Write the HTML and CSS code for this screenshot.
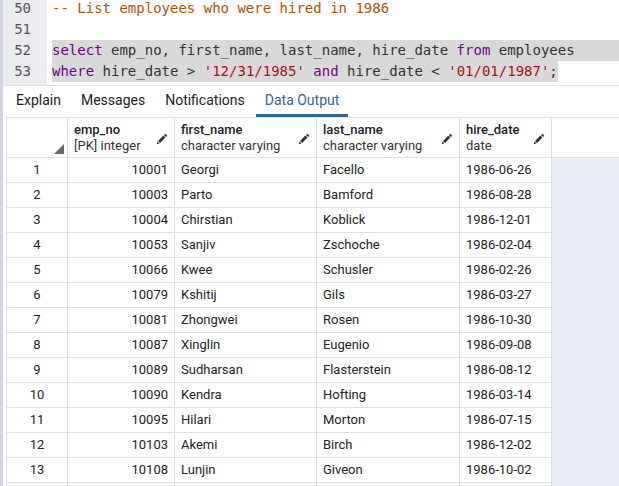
FILE: index.html
```html
<!DOCTYPE html>
<html>
<head>
<meta charset="utf-8">
<link rel="stylesheet" href="styles.css">
</head>
<body>
<div class="app">
  <div class="editor">
    <div class="gutter">
      <div class="ln">50</div>
      <div class="ln">51</div>
      <div class="ln">52</div>
      <div class="ln">53</div>
    </div>
    <div class="code">
      <div class="line"><span class="cm-comment">-- List employees who were hired in 1986</span></div>
      <div class="line">&nbsp;</div>
      <div class="line"><span class="sel sel-full"><span class="cm-kw">select</span> emp_no, first_name, last_name, hire_date <span class="cm-kw">from</span> employees</span></div>
      <div class="line"><span class="sel"><span class="cm-kw">where</span> hire_date &gt; <span class="cm-str">'12/31/1985'</span> <span class="cm-kw">and</span> hire_date &lt; <span class="cm-str">'01/01/1987'</span>;</span></div>
    </div>
  </div>

  <div class="tabs">
    <div class="tab">Explain</div>
    <div class="tab">Messages</div>
    <div class="tab">Notifications</div>
    <div class="tab active">Data Output</div>
  </div>

  <div class="grid">
    <div class="hc hc-corner"><svg class="corner" width="10" height="10" viewBox="0 0 10 10"><polygon points="10,0 10,10 0,10" fill="#666"/></svg></div>
    <div class="hc"><div class="hlabel"><div class="hname">emp_no</div><div class="htype">[PK] integer</div></div><svg class="pencil" width="12" height="12" viewBox="0 0 16 16"><path d="M12.4 0.9l2.7 2.7-1.7 1.7-2.7-2.7z M9.9 3.4l2.7 2.7-7.2 7.2-2.7-2.7z M2 11.4l2.6 2.6-3.6 1z" fill="#333"/></svg></div>
    <div class="hc"><div class="hlabel"><div class="hname">first_name</div><div class="htype">character varying</div></div><svg class="pencil" width="12" height="12" viewBox="0 0 16 16"><path d="M12.4 0.9l2.7 2.7-1.7 1.7-2.7-2.7z M9.9 3.4l2.7 2.7-7.2 7.2-2.7-2.7z M2 11.4l2.6 2.6-3.6 1z" fill="#333"/></svg></div>
    <div class="hc"><div class="hlabel"><div class="hname">last_name</div><div class="htype">character varying</div></div><svg class="pencil" width="12" height="12" viewBox="0 0 16 16"><path d="M12.4 0.9l2.7 2.7-1.7 1.7-2.7-2.7z M9.9 3.4l2.7 2.7-7.2 7.2-2.7-2.7z M2 11.4l2.6 2.6-3.6 1z" fill="#333"/></svg></div>
    <div class="hc"><div class="hlabel"><div class="hname">hire_date</div><div class="htype">date</div></div><svg class="pencil" width="12" height="12" viewBox="0 0 16 16"><path d="M12.4 0.9l2.7 2.7-1.7 1.7-2.7-2.7z M9.9 3.4l2.7 2.7-7.2 7.2-2.7-2.7z M2 11.4l2.6 2.6-3.6 1z" fill="#333"/></svg></div>
    <div class="hc hc-fill"></div>

    <div class="c num">1</div><div class="c r">10001</div><div class="c">Georgi</div><div class="c">Facello</div><div class="c">1986-06-26</div><div class="fill"></div>
    <div class="c num">2</div><div class="c r">10003</div><div class="c">Parto</div><div class="c">Bamford</div><div class="c">1986-08-28</div><div class="fill"></div>
    <div class="c num">3</div><div class="c r">10004</div><div class="c">Chirstian</div><div class="c">Koblick</div><div class="c">1986-12-01</div><div class="fill"></div>
    <div class="c num">4</div><div class="c r">10053</div><div class="c">Sanjiv</div><div class="c">Zschoche</div><div class="c">1986-02-04</div><div class="fill"></div>
    <div class="c num">5</div><div class="c r">10066</div><div class="c">Kwee</div><div class="c">Schusler</div><div class="c">1986-02-26</div><div class="fill"></div>
    <div class="c num">6</div><div class="c r">10079</div><div class="c">Kshitij</div><div class="c">Gils</div><div class="c">1986-03-27</div><div class="fill"></div>
    <div class="c num">7</div><div class="c r">10081</div><div class="c">Zhongwei</div><div class="c">Rosen</div><div class="c">1986-10-30</div><div class="fill"></div>
    <div class="c num">8</div><div class="c r">10087</div><div class="c">Xinglin</div><div class="c">Eugenio</div><div class="c">1986-09-08</div><div class="fill"></div>
    <div class="c num">9</div><div class="c r">10089</div><div class="c">Sudharsan</div><div class="c">Flasterstein</div><div class="c">1986-08-12</div><div class="fill"></div>
    <div class="c num">10</div><div class="c r">10090</div><div class="c">Kendra</div><div class="c">Hofting</div><div class="c">1986-03-14</div><div class="fill"></div>
    <div class="c num">11</div><div class="c r">10095</div><div class="c">Hilari</div><div class="c">Morton</div><div class="c">1986-07-15</div><div class="fill"></div>
    <div class="c num">12</div><div class="c r">10103</div><div class="c">Akemi</div><div class="c">Birch</div><div class="c">1986-12-02</div><div class="fill"></div>
    <div class="c num">13</div><div class="c r">10108</div><div class="c">Lunjin</div><div class="c">Giveon</div><div class="c">1986-10-02</div><div class="fill"></div>
    <div class="c num"></div><div class="c r"></div><div class="c"></div><div class="c"></div><div class="c"></div><div class="fill"></div>
  </div>
</div>
</body>
</html>
```
FILE: styles.css
```css
html, body {
  margin: 0;
  padding: 0;
  background: #fff;
}
.app {
  width: 619px;
  height: 486px;
  overflow: hidden;
  border-left: 3px solid #cfd4e1;
  box-sizing: border-box;
  display: flex;
  flex-direction: column;
  font-family: Roboto, "Liberation Sans", sans-serif;
  color: #222;
}
.editor {
  flex: 0 0 85px;
  height: 85px;
  display: flex;
  overflow: hidden;
  border-bottom: 1px solid #dde0e6;
  font-family: "DejaVu Sans Mono", monospace;
  font-size: 14px;
}
.gutter {
  width: 44px;
  flex: 0 0 44px;
  background: #ebecf0;
  padding-top: 0;
}
.ln {
  height: 21px;
  line-height: 21px;
  text-align: right;
  padding-right: 16px;
  color: #555;
  font-size: 14px;
}
.gutter .ln:first-child,
.code .line:first-child {
  margin-top: -2px;
}
.code {
  flex: 1;
  min-width: 0;
}
.line {
  height: 21px;
  line-height: 21px;
  padding-left: 5px;
  white-space: pre;
  color: #333;
}
.sel {
  display: inline-block;
  background: #d9d9d9;
  height: 21px;
}
.sel-full {
  display: block;
}
.cm-comment { color: #aa5500; }
.cm-kw { color: #770088; }
.cm-str { color: #aa1111; }

.tabs {
  flex: 0 0 31px;
  height: 31px;
  box-sizing: border-box;
  display: flex;
  padding-left: 3px;
  font-size: 14px;
}
.tab {
  padding: 0 10px;
  line-height: 29px;
  height: 31px;
  box-sizing: border-box;
  color: #222;
}
.tab.active {
  color: #326690;
  border-bottom: 3px solid #326690;
  padding: 0 9px 0 9px;
  margin-left: 1px;
}

.grid {
  margin-left: 3px;
  display: grid;
  grid-template-columns: 61px 107px 142px 143px 92px 1fr;
  grid-auto-rows: 25px;
  grid-template-rows: 40px;
  border-top: 1px solid #dde0e6;
  border-left: 1px solid #dde0e6;
  font-size: 13px;
}
.hc {
  border-right: 1px solid #dde0e6;
  border-bottom: 1px solid #dde0e6;
  display: flex;
  align-items: center;
  justify-content: space-between;
  padding: 0 6px;
  min-width: 0;
}
.hc-corner {
  align-items: flex-end;
  justify-content: flex-end;
  padding: 0 3px 3px 0;
}
.hc-fill {
  border-right: none;
}
.hlabel {
  line-height: 16px;
  white-space: nowrap;
}
.hname {
  font-weight: 500;
  color: #222;
}
.htype {
  color: #333;
}
.pencil {
  flex: 0 0 auto;
  margin-top: 2px;
}
.c {
  border-right: 1px solid #dde0e6;
  border-bottom: 1px solid #dde0e6;
  line-height: 24px;
  padding: 0 6px;
  white-space: nowrap;
  overflow: hidden;
  color: #222;
}
.c.num {
  text-align: center;
  padding: 0;
}
.c.r {
  text-align: right;
}
.fill {
  background: #e9ecf3;
}
```
